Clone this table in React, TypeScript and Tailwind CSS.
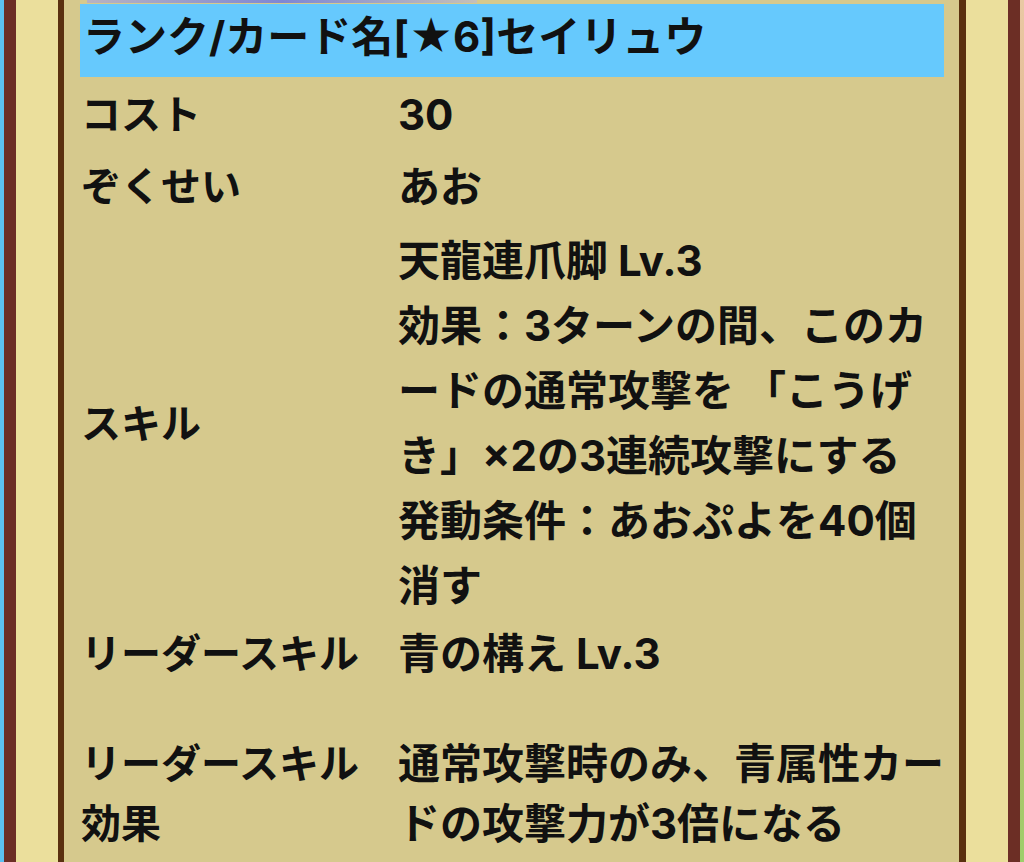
const skillLines = [
  "天龍連爪脚 Lv.3",
  "効果：3ターンの間、このカ",
  "ードの通常攻撃を 「こうげ",
  "き」×2の3連続攻撃にする",
  "発動条件：あおぷよを40個",
  "消す",
]

function Edge({ side }: { side: "left" | "right" }) {
  const strips =
    side === "left"
      ? ["w-[4px] bg-[#5cc0f0]", "w-[12px] bg-[#6c2e25]", "w-[42px] bg-[#ebdf9c]", "w-[6px] bg-[#5a300f]"]
      : ["w-[7px] bg-[#5a300f]", "w-[42px] bg-[#ebdf9c]", "w-[12px] bg-[#6c2e25]", "w-[4px] bg-gradient-to-b from-[#e9c9a4] via-[#d89c72] to-[#9ccf6a]"]
  return (
    <>
      {strips.map((c, i) => (
        <div key={i} className={`h-full flex-shrink-0 ${c}`} />
      ))}
    </>
  )
}

const label = "w-[318px] flex-shrink-0 pl-px text-[40px]"

export default function App() {
  return (
    <div className="flex h-[862px] w-[1024px] overflow-hidden font-['Inter','Noto_Sans_CJK_JP',sans-serif] text-[42px] font-bold text-[#111]">
      <Edge side="left" />

      <main className="flex-1 bg-[#d6c98d] pl-4 pr-[15px]">
        {/* thin shadow above the title bar */}
        <div className="ml-[7px] h-[3px] w-[390px] bg-gradient-to-r from-[#b8b2c0] via-[#7f86d4] to-[#c5bfb8]" />

        {/* Title */}
        <div className="mt-px flex h-[73px] items-center bg-[#66c9fd] pb-[8px] pl-[3px] leading-none">
          ランク/カード名[★6]セイリュウ
        </div>

        {/* Cost */}
        <div className="mt-[6px] flex leading-[64px]">
          <div className={label}>コスト</div>
          <div>30</div>
        </div>

        {/* Attribute */}
        <div className="mt-[8px] flex leading-[64px]">
          <div className={label}>ぞくせい</div>
          <div>あお</div>
        </div>

        {/* Skill */}
        <div className="mt-[9px] flex items-center leading-[65px]">
          <div className={label}>スキル</div>
          <div>
            {skillLines.map((l) => (
              <div key={l} className="whitespace-pre">
                {l}
              </div>
            ))}
          </div>
        </div>

        {/* Leader skill */}
        <div className="mt-[4px] flex leading-[64px]">
          <div className={label}>リーダースキル</div>
          <div>青の構え Lv.3</div>
        </div>

        {/* Leader skill effect */}
        <div className="mt-[48px] flex leading-[60px]">
          <div className={label}>
            <div>リーダースキル</div>
            <div>効果</div>
          </div>
          <div>
            <div>通常攻撃時のみ、青属性カー</div>
            <div>ドの攻撃力が3倍になる</div>
          </div>
        </div>
      </main>

      <Edge side="right" />
    </div>
  )
}
